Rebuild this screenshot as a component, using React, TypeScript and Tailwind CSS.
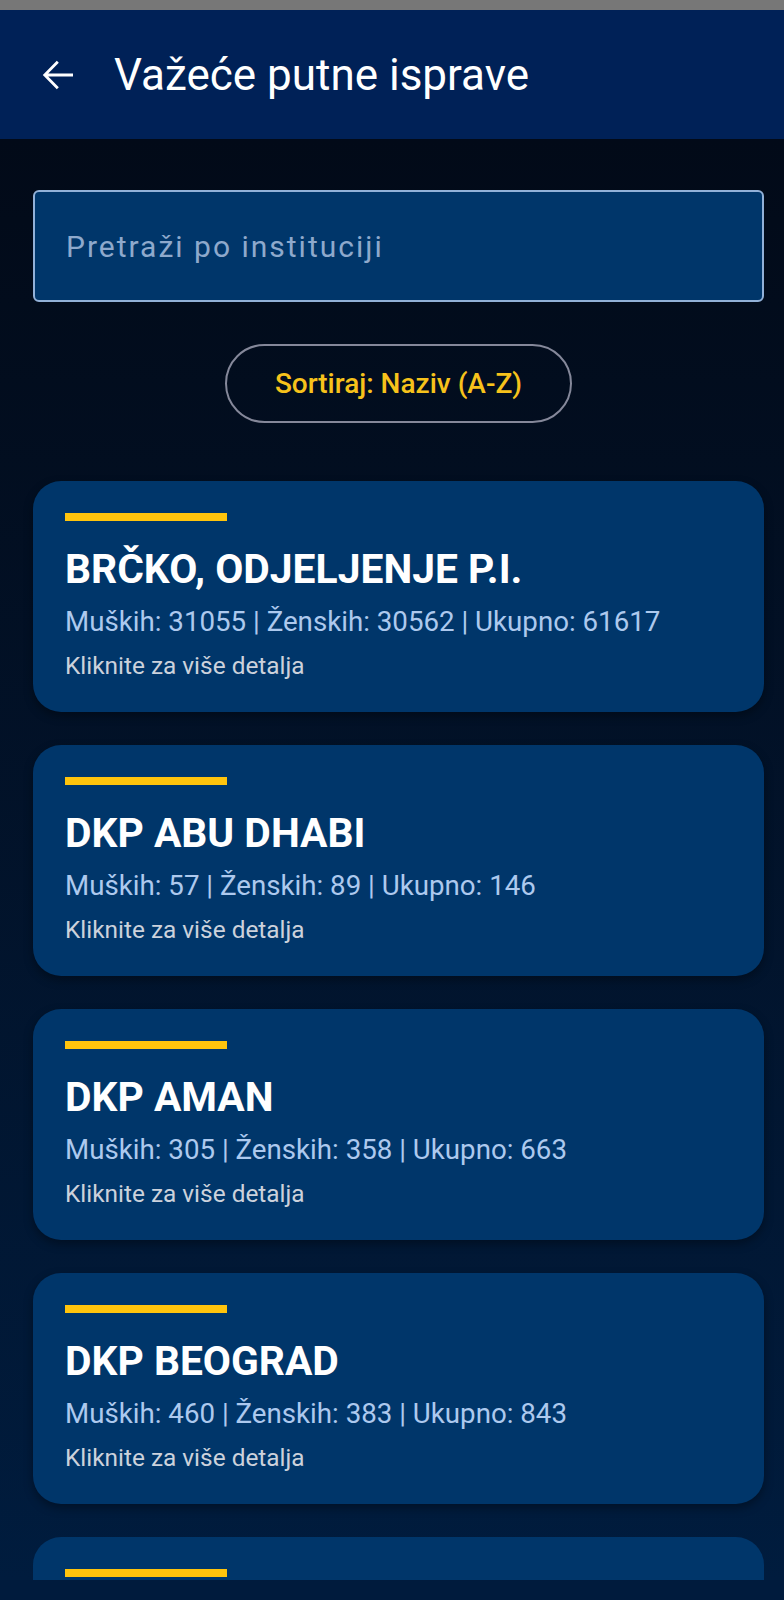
import { useState } from "react";

interface Office {
  name: string;
  male: number;
  female: number;
}

const offices: Office[] = [
  { name: "BRČKO, ODJELJENJE P.I.", male: 31055, female: 30562 },
  { name: "DKP ABU DHABI", male: 57, female: 89 },
  { name: "DKP AMAN", male: 305, female: 358 },
  { name: "DKP BEOGRAD", male: 460, female: 383 },
];

function BackArrow() {
  return (
    <svg width="48" height="48" viewBox="0 0 24 24" fill="white" aria-hidden>
      <path d="M20 11.2H7.6l5.3-5.3-1-1L4.9 12l7 7.1 1-1-5.3-5.3H20z" />
    </svg>
  );
}

function OfficeCard({ office }: { office: Office }) {
  return (
    <div className="shrink-0 h-[231px] rounded-[28px] bg-[#00366a] pl-[32px] pt-[32px] shadow-[0_4px_10px_rgba(0,0,0,0.35)]">
      <div className="w-[162px] h-[8px] bg-[#ffc40c]" />
      <h3 className="mt-[25px] text-[40.8px] leading-[46px] font-bold text-white">{office.name}</h3>
      <p className="mt-[12px] text-[27.7px] leading-[36px] text-[#adc9ee]">
        Muških: {office.male} | Ženskih: {office.female} | Ukupno: {office.male + office.female}
      </p>
      <p className="mt-[10px] text-[24.4px] leading-[32px] text-[#ccd2dc]">Kliknite za više detalja</p>
    </div>
  );
}

export default function App() {
  const [query, setQuery] = useState("");

  return (
    <div className="w-[784px] h-[1600px] flex flex-col overflow-hidden bg-[#001b3d] font-['Roboto','Noto_Sans',sans-serif]">
      <div className="h-[10px] bg-[#777777]" />
      <header className="h-[129px] shrink-0 bg-[#002157] flex items-center pl-[33px]">
        <BackArrow />
        <h1 className="ml-[33px] text-[44px] text-white font-normal">Važeće putne isprave</h1>
      </header>

      <main className="flex-1 overflow-hidden bg-gradient-to-b from-[#020a18] to-[#001c3e] pl-[33px] pr-[20px] flex flex-col">
        <div className="mt-[51px] h-[112px] shrink-0 rounded-[6px] border-2 border-[#92b1d8] bg-[#00366a] flex items-center pl-[31px]">
          <input
            value={query}
            onChange={(e) => setQuery(e.target.value)}
            placeholder="Pretraži po instituciji"
            className="w-full bg-transparent outline-none text-[30px] tracking-[2px] text-white placeholder:text-[#8ea9cc]"
          />
        </div>

        <div className="mt-[42px] flex justify-center shrink-0">
          <button className="w-[347px] h-[79px] rounded-full border-2 border-[#85889a] text-[28px] font-medium text-[#f7c21b]">
            Sortiraj: Naziv (A-Z)
          </button>
        </div>

        <div className="mt-[58px] flex flex-col gap-[33px]">
          {offices.map((o) => (
            <OfficeCard key={o.name} office={o} />
          ))}
          {/* next card, scrolled below the fold */}
          <div className="shrink-0 h-[231px] rounded-[28px] bg-[#00366a] pl-[32px] pt-[32px]">
            <div className="w-[162px] h-[8px] bg-[#ffc40c]" />
          </div>
        </div>
      </main>
      <div className="h-[20px] shrink-0 bg-[#001b3d]" />
    </div>
  );
}
